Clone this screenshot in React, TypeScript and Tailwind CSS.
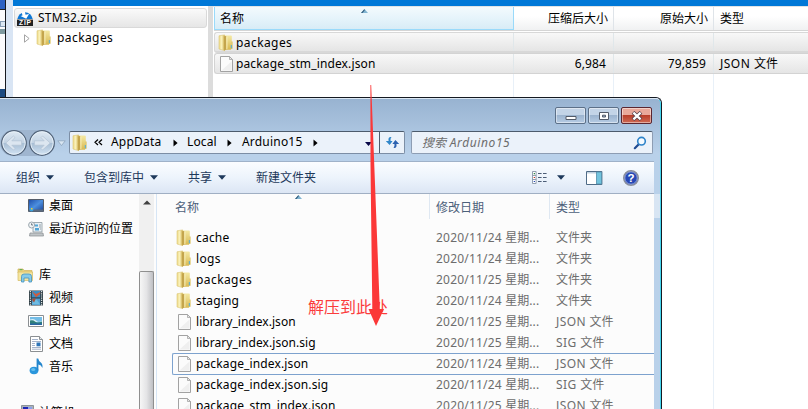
import React from "react";

const latin = "font-['Noto_Sans','Noto_Sans_CJK_SC',sans-serif]";

/* Latin runs get a slightly wider tracking than the Chinese ones. */
function Txt({
  children,
  className = "",
  track = "tracking-[0.13px]",
}: {
  children: string;
  className?: string;
  track?: string;
}) {
  const runs = children.match(/[\u4e00-\u9fff]+|[^\u4e00-\u9fff]+/g) ?? [];
  return (
    <span className={`whitespace-pre ${className}`}>
      {runs.map((r, i) =>
        /[\u4e00-\u9fff]/.test(r) ? (
          <span key={i}>{r}</span>
        ) : (
          <span key={i} className={track}>{r}</span>
        ),
      )}
    </span>
  );
}

function Folder() {
  return (
    <svg width="16" height="18" viewBox="0 0 16 18" className="shrink-0">
      <defs>
        <linearGradient id="fa" x1="0" x2="1" y1="0" y2="0">
          <stop offset="0" stopColor="#ecd98a" />
          <stop offset=".5" stopColor="#fbf3bd" />
          <stop offset="1" stopColor="#c9a842" />
        </linearGradient>
        <linearGradient id="fb" x1="0" x2="0" y1="0" y2="1">
          <stop offset="0" stopColor="#f4e9a4" />
          <stop offset="1" stopColor="#d9b950" />
        </linearGradient>
      </defs>
      <path d="M6.8 1.6h6.2q.8 0 .8.8V14.2l-1 1.5H6.8z" fill="url(#fb)" />
      <path d="M1 1.8 6.6.9v15.7L1 15z" fill="url(#fa)" stroke="#dcc674" strokeWidth=".6" />
      <path d="M6 2.2 8.2 2v13.4l-2.2 1.4z" fill="#c4a54c" />
      <path d="M8.4 2.4h1v12.4l-1 .5z" fill="#f8efbd" />
      <path d="M13.4 7.5h1.2v7.2h-1.2z" fill="#dcc15c" />
      <path d="M12.8 11h1.1v3.2h-1.1z" fill="#5aaed2" />
    </svg>
  );
}

function Page() {
  return (
    <svg width="16" height="18" viewBox="0 0 16 18" className="shrink-0">
      <path d="M2.5 1.5h9l3 3v12h-12z" fill="#fbfbfb" stroke="#a2a2a2" />
      <path d="M3.5 15.5h10v-9z" fill="#efefef" />
      <path d="M11.5 1.5v3h3z" fill="#e9e9e9" stroke="#a2a2a2" strokeWidth=".8" />
    </svg>
  );
}

function SortMark() {
  return (
    <svg width="7" height="4" viewBox="0 0 7 4">
      <path d="M0 4 3.5 0 7 4z" fill="#82b5d2" />
      <path d="M0 4 3.5 0v1.5L1.5 4z" fill="#2f5878" />
    </svg>
  );
}

function ZipIcon() {
  return (
    <svg width="16" height="17" viewBox="0 0 16 17" className="shrink-0">
      <path d="M.3 9A7.8 8 0 0 1 15.7 9z" fill="#0d76d3" />
      <path d="M5.4 1.6h3.2v3.2h3.6L8.4 9 3.4 5h2z" fill="#fff" transform="rotate(-12 8 5)" />
      <path d="M0 9.6h16V16H0z" fill="#222" />
      <text x="8" y="15.2" textAnchor="middle" fontSize="6.6" fontWeight="700" fill="#fff" textLength="12" fontFamily="Liberation Sans">ZIP</text>
    </svg>
  );
}

function Down({ className = "" }: { className?: string }) {
  return (
    <svg width="8" height="5" viewBox="0 0 8 5" className={`shrink-0 ${className}`}>
      <path d="M0 .3h8L4 4.8z" fill="#1e395b" />
    </svg>
  );
}

function Crumb({ className = "" }: { className?: string }) {
  return (
    <svg width="5" height="8" viewBox="0 0 5 8" className={`shrink-0 ${className}`}>
      <path d="M.5.5v7L4.6 4z" fill="#000" />
    </svg>
  );
}

function DesktopIcon() {
  return (
    <svg width="16" height="16" viewBox="0 0 16 16" className="shrink-0">
      <defs>
        <linearGradient id="dk" x1="0" y1="0" x2="1" y2="1">
          <stop offset="0" stopColor="#1d4ca8" />
          <stop offset=".5" stopColor="#4c8fdf" />
          <stop offset="1" stopColor="#173f94" />
        </linearGradient>
      </defs>
      <path d="M.5 1.5h15v12H.5z" fill="url(#dk)" stroke="#555d69" />
      <path d="M1 11.5h14v2H1z" fill="#5a6b80" />
      <circle cx="3.5" cy="11.5" r="2" fill="#3ba0dc" />
      <path d="M3 10h1.5v1.5H3z" fill="#f6c832" />
    </svg>
  );
}

function RecentIcon() {
  return (
    <svg width="16" height="16" viewBox="0 0 16 16" className="shrink-0">
      <path d="M5 1.5h9v9.5H5z" fill="#e9f1f6" stroke="#8c979e" strokeWidth=".8" />
      <path d="M7 3.5h3v2H7zM7 7h4v2.5H7z" fill="#55a5d5" />
      <path d="M11 4h2M11 6h2M12 8h1" stroke="#7f8b92" strokeWidth=".8" />
      <path d="M2 12h13l.5 3h-14z" fill="#c0c5c8" stroke="#868c90" strokeWidth=".7" />
      <circle cx="3.6" cy="4" r="3" fill="#f1f4f6" stroke="#9aa5ad" />
      <path d="M3.6 2.3V4H5" stroke="#52606a" fill="none" strokeWidth=".8" />
    </svg>
  );
}

function LibraryIcon() {
  return (
    <svg width="17" height="16" viewBox="0 0 17 16" className="shrink-0">
      <path d="M1 2h5l1.2 1.5H15V6H1z" fill="#edd582" stroke="#d0b25a" strokeWidth=".7" />
      <path d="M2.5 2.7h3" stroke="#4ea84a" />
      <path d="M1 5h14.5v8.5H1z" fill="#f5e5a0" stroke="#d6bb63" strokeWidth=".7" />
      <path d="M4.5 15V9.5q0-2.5 2.5-2.5h5q2.5 0 2.5 2.5V15h-2.6v-4H7v4z" fill="#86cbea" stroke="#4592bd" strokeWidth=".8" />
    </svg>
  );
}

function VideoIcon() {
  return (
    <svg width="16" height="16" viewBox="0 0 16 16" className="shrink-0">
      <path d="M1 .5h14v15H1z" fill="#2d3b42" />
      <path d="M3.8 1h8.4v6.4H3.8z" fill="#3a8dc4" />
      <path d="M3.8 8.5h8.4V15H3.8z" fill="#529ed2" />
      <path d="M3.8 1 8 4l4.2-2v2L8 7.2z" fill="#cf5c3e" />
      <path d="M3.8 14 7 9l2 1 3.2 4.5z" fill="#6fbce2" />
      <path d="M3.8 9.5 6 8.5h2l-2 4z" fill="#a4503e" />
      <path d="M2.4 1v15M13.6 1v15" stroke="#dbe3e6" strokeWidth="1.2" strokeDasharray="1.2 1" />
    </svg>
  );
}

function PictureIcon() {
  return (
    <svg width="16" height="16" viewBox="0 0 16 16" className="shrink-0">
      <path d="M.5 2.5h15v11H.5z" fill="#fff" stroke="#8b8f92" />
      <path d="M2 4h12v8H2z" fill="#73bce6" />
      <path d="M2 6.5q4-1.5 6 1t6 .5v1H2z" fill="#d9f0f8" />
      <path d="M2 7.5q3-1 5 1t7 0V12H2z" fill="#2f7f7b" />
      <path d="M2 10.5h12V12H2z" fill="#2b66a3" />
    </svg>
  );
}

function DocIcon() {
  return (
    <svg width="16" height="16" viewBox="0 0 16 16" className="shrink-0">
      <path d="M2.5.5h9l3 3v12h-12z" fill="#fff" stroke="#8b8f92" />
      <path d="M11.5.5v3h3" fill="#e8edf0" stroke="#8b8f92" />
      <path d="M4 3.5h6M4 5.5h9M4 7.5h3M4 9.5h3M4 11.5h9M4 13.2h9" stroke="#8ea0bd" strokeWidth=".8" />
      <path d="M8.5 6.5h4v3.8h-4z" fill="#2f75b8" />
    </svg>
  );
}

function MusicIcon() {
  return (
    <svg width="16" height="17" viewBox="0 0 16 17" className="shrink-0">
      <ellipse cx="6" cy="12.5" rx="4.4" ry="3.7" fill="#2a96dc" />
      <ellipse cx="5.2" cy="11.5" rx="2" ry="1.5" fill="#67c0ef" />
      <path d="M8.6 12.5V.5h1.6q.4 2.3 2.6 4t1.6 5.4q-1.2-3-4-3.4v6z" fill="#2587cd" />
    </svg>
  );
}

function ComputerIcon() {
  return (
    <svg width="14" height="16" viewBox="0 0 14 16" className="shrink-0">
      <path d="M1.5.5h12v11h-12z" fill="#aab2ba" stroke="#8d949b" />
      <path d="M3 2h9v8H3z" fill="#1c25b5" />
      <path d="M8 2h4v8H8z" fill="#8ba1ed" />
    </svg>
  );
}

const files: [string, string, string][] = [
  ["cache", "2020/11/24 星期...", "文件夹"],
  ["logs", "2020/11/24 星期...", "文件夹"],
  ["packages", "2020/11/25 星期...", "文件夹"],
  ["staging", "2020/11/24 星期...", "文件夹"],
  ["library_index.json", "2020/11/25 星期...", "JSON 文件"],
  ["library_index.json.sig", "2020/11/25 星期...", "SIG 文件"],
  ["package_index.json", "2020/11/24 星期...", "JSON 文件"],
  ["package_index.json.sig", "2020/11/24 星期...", "SIG 文件"],
  ["package_stm_index.json", "2020/11/25 星期...", "JSON 文件"],
];

const nameTrack: Record<string, string> = {
  cache: "tracking-[0.2px]",
  logs: "tracking-[0.3px]",
  packages: "tracking-[0.42px]",
  "library_index.json": "tracking-[0.04px]",
  "library_index.json.sig": "tracking-[0.06px]",
};

function NavRow({ icon, label, className = "pl-7" }: { icon: React.ReactNode; label: string; className?: string }) {
  return (
    <div className={`flex h-[23px] shrink-0 items-center gap-[5px] ${className}`}>
      {icon}
      <Txt>{label}</Txt>
    </div>
  );
}

function ArchiveWindow() {
  return (
    <div className="flex h-[100px] w-full">
      <div className="flex w-[6px] shrink-0 flex-col border-r border-[#171a20] bg-[#fbfbfd]">
        <div className="h-[9px] bg-[#2c62c4]" />
        <div className="h-px bg-[#222]" />
        <div className="mt-[11px] h-[6px] border border-r-0 border-[#8aa0b8] bg-[#dbe7f3]" />
        <div className="mt-[2px] h-[5px] bg-[#7f9aa0]" />
        <div className="mt-[55px] h-[8px] bg-[#1c4a80]" />
      </div>
      <div className="w-[7px] shrink-0 bg-[#d9e5f4]" />
      <div className="flex min-w-0 flex-1 flex-col">
        <div className="h-[6px] shrink-0 bg-[#0078d7]" />
        <div className="flex min-h-0 flex-1">
          <div className="w-[195px] shrink-0 bg-white pt-[2px] pl-px">
            <div className="flex h-5 w-[193px] items-center gap-[5px] rounded-[3px] border border-[#d9d9d9] bg-linear-to-b from-[#fafafa] to-[#e6e6e6] pl-[2px]">
              <ZipIcon />
              <Txt track="tracking-[0.25px]">STM32.zip</Txt>
            </div>
            <div className="flex h-5 items-center pl-[10px]">
              <svg width="6" height="9" viewBox="0 0 6 9">
                <path d="M.5.8v7.4l4.6-3.7z" fill="#fff" stroke="#9b9b9b" strokeWidth=".9" />
              </svg>
              <div className="ml-[6px] flex items-center gap-[5px]">
                <Folder />
                <Txt track="tracking-[0.42px]">packages</Txt>
              </div>
            </div>
          </div>
          <div className="w-[5px] shrink-0 bg-[#dcdcdc]" />
          <div className="flex min-w-0 flex-1 flex-col border-t border-[#dfe3e6] bg-white pl-px">
            <div className="flex h-[24px] shrink-0 border-b border-[#d5d5d5] bg-linear-to-b from-white via-white via-40% to-[#f0f1f2]">
              <div className="relative flex w-[300px] items-center border-x border-b border-[#9adafa] bg-linear-to-b from-[#f3fafd] via-[#e6f4fb] via-50% to-[#d8ecf6] pt-[2px] pl-[5px]">
                <Txt>名称</Txt>
                <div className="absolute top-[2px] left-[146px]"><SortMark /></div>
              </div>
              <div className="flex w-[100px] items-center justify-end border-r border-[#dfe4e9] pt-px pr-[5px]"><Txt>压缩后大小</Txt></div>
              <div className="flex w-[100px] items-center justify-end border-r border-[#dfe4e9] pt-px pr-[5px]"><Txt>原始大小</Txt></div>
              <div className="flex flex-1 items-center pt-px pl-[6px]"><Txt>类型</Txt></div>
            </div>
            <div className="mt-px flex h-[21px] shrink-0 items-center rounded-l-[3px] border border-r-0 border-b-2 border-[#d8d8d8] bg-linear-to-b from-[#f8f8f8] to-[#e5e5e5]">
              <div className="flex h-full w-[299px] items-center gap-[2px] border-r border-[#e0e7ea] pt-px pl-[3px]"><Folder /><Txt track="tracking-[0.42px]">packages</Txt></div>
              <div className="h-full w-[100px] border-r border-[#e0e7ea]" />
              <div className="h-full w-[100px] border-r border-[#e0e7ea]" />
            </div>
            <div className="flex h-[21px] shrink-0 items-center rounded-l-[3px] border border-r-0 border-[#d3d3d3] bg-linear-to-b from-[#f8f8f8] to-[#e5e5e5]">
              <div className="flex h-full w-[299px] items-center gap-[2px] border-r border-[#e0e7ea] pl-[3px]"><Page /><Txt>package_stm_index.json</Txt></div>
              <div className="flex h-full w-[100px] items-center justify-end border-r border-[#e0e7ea] pr-[7px]"><Txt>6,984</Txt></div>
              <div className="flex h-full w-[100px] items-center justify-end border-r border-[#e0e7ea] pr-[7px]"><Txt>79,859</Txt></div>
              <Txt className="pl-[6px]" track="tracking-[0.5px]">JSON 文件</Txt>
            </div>
            <div className="flex flex-1">
              <div className="w-[300px] border-r border-[#e8f0f8]" />
              <div className="w-[100px] border-r border-[#e8f0f8]" />
              <div className="w-[100px] border-r border-[#e8f0f8]" />
            </div>
          </div>
        </div>
      </div>
    </div>
  );
}

function NavButton({ flip = false }: { flip?: boolean }) {
  return (
    <svg width="26" height="26" viewBox="0 0 26 26" className={flip ? "-scale-x-100" : ""}>
      <defs>
        <linearGradient id="nb" x1="0" y1="0" x2="0" y2="1">
          <stop offset="0" stopColor="#dfe9f3" />
          <stop offset=".48" stopColor="#c4d4e4" />
          <stop offset=".52" stopColor="#a9bfd5" />
          <stop offset="1" stopColor="#d3e4f4" />
        </linearGradient>
      </defs>
      <circle cx="13" cy="13" r="12.3" fill="url(#nb)" stroke="#53647a" strokeWidth="1.2" />
      <circle cx="13" cy="13" r="11.2" fill="none" stroke="#e6eff7" strokeWidth=".9" />
      <path d="M4.8 13 12.4 6 14 7.6l-3.2 3.2h9.8v4.4h-9.8l3.2 3.2-1.6 1.6z" fill="#dce6f0" stroke="#b3c3d4" strokeWidth=".7" />
    </svg>
  );
}

function CaptionButton({ close = false, children }: { close?: boolean; children: React.ReactNode }) {
  return (
    <div
      className={`flex h-[17px] w-[31px] items-center justify-center rounded-[2px] border shadow-[inset_0_0_0_1px_rgba(255,255,255,0.45)] bg-linear-to-b ${
        close
          ? "border-[#5b2630] from-[#e9a99b] from-45% via-[#b93f2b] via-50% to-[#cf6a54]"
          : "border-[#5c7088] from-[#c3d4e7] from-45% via-[#9cb4cf] via-50% to-[#b6cce4]"
      }`}
    >
      {children}
    </div>
  );
}

function TitleBar() {
  return (
    <div className="flex h-[32px] justify-end gap-[2px] pt-[8px] pr-[8px]">
      <CaptionButton>
        <svg width="12" height="6" viewBox="0 0 12 6" className="mt-[4px]"><path d="M1 1.5h10v3H1z" fill="#fff" stroke="#535b69" /></svg>
      </CaptionButton>
      <CaptionButton>
        <svg width="12" height="10" viewBox="0 0 12 10"><path d="M1.5 1.5h9v7h-9z" fill="#fff" stroke="#535b69" /><path d="M4.5 4.2h3v1.8h-3z" fill="#9fb6d0" stroke="#535b69" /></svg>
      </CaptionButton>
      <CaptionButton close>
        <svg width="12" height="10" viewBox="0 0 12 10">
          <path d="m2 1.3 8 7.4M10 1.3 2 8.7" stroke="#55404a" strokeWidth="3.8" />
          <path d="m2.4 1.6 7.2 6.8M9.6 1.6 2.4 8.4" stroke="#fff" strokeWidth="2.2" />
        </svg>
      </CaptionButton>
    </div>
  );
}

function AddressRow() {
  return (
    <div className="flex h-[30px] items-start">
      <div className="-mt-px flex h-[26px] w-[55px] gap-[2px] rounded-full bg-[#9fb5cf] pl-px">
        <NavButton />
        <NavButton flip />
      </div>
      <svg width="9" height="7" viewBox="0 0 9 7" className="mt-[9px] ml-[2px]">
        <path d="M.8.8h7.4L4.5 5.6z" fill="#d9e6f2" stroke="#8ea5bd" strokeWidth=".8" />
      </svg>
      <div className="ml-[3px] flex h-[23px] w-[336px] items-center rounded-[2px] border border-[#7c8ea5] border-t-[#4c5b6c] bg-[#ebf2fa] pl-[2px]">
        <Folder />
        <svg width="9" height="7" viewBox="0 0 9 7" className="ml-[6px]">
          <path d="M4 .5 1 3.3 4 6M8 .5 5 3.3 8 6" fill="none" stroke="#000" strokeWidth="1.2" />
        </svg>
        <Txt className="-mt-px ml-[8px] w-[52px]" track="tracking-[0.2px]">AppData</Txt>
        <Crumb className="ml-[10px]" />
        <Txt className="-mt-px ml-[9px] w-[31px]">Local</Txt>
        <Crumb className="ml-[9px]" />
        <Txt className="-mt-px ml-[10px] w-[62px]" track="tracking-[0.2px]">Arduino15</Txt>
        <Crumb className="ml-[9px]" />
        <svg width="7" height="4" viewBox="0 0 7 4" className="ml-[47px] mt-[2px]"><path d="M0 0h7L3.5 4z" fill="#080848" /></svg>
        <div className="ml-auto flex h-full w-[25px] items-center justify-center border-l border-[#4c5b6c]">
          <svg width="15" height="13" viewBox="0 0 15 13">
            <path d="M6 1Q2.8.8 3.6 5H.8l3.8 4 3-4H5.6Q5 2.5 6.4 1.6z" fill="#2f86c9" />
            <path d="M9 12q3.2.2 2.4-4h2.8l-3.8-4-3 4h2Q10 10.5 8.6 11.4z" fill="#2d62b0" />
          </svg>
        </div>
      </div>
      <div className="ml-[6px] flex h-[23px] w-[242px] items-center justify-between rounded-[2px] border border-[#8d9db3] border-t-[#4c5b6c] bg-[#ebf2fa] pr-[5px] pl-[10px]">
        <Txt className="text-[#6d6d6d] italic" track="tracking-[0.6px]">搜索 Arduino15</Txt>
        <svg width="14" height="14" viewBox="0 0 14 14">
          <path d="M6 8 1.8 12.2" stroke="#1f4b91" strokeWidth="2.2" strokeLinecap="round" />
          <circle cx="8.5" cy="5.2" r="3.8" fill="#f4faff" stroke="#2d83c9" strokeWidth="1.6" />
        </svg>
      </div>
    </div>
  );
}

function ToolBar() {
  return (
    <div className="flex h-[33px] w-[654px] shrink-0 items-center border-t border-b border-t-[#9fb2c9] border-b-[#a0afc3] bg-linear-to-b from-[#fbfdff] via-[#edf4fc] via-50% to-[#dce6f4] pl-4 text-[#1e395b]">
      <Txt>组织</Txt><Down className="ml-[6px]" />
      <Txt className="ml-[30px]">包含到库中</Txt><Down className="ml-[6px]" />
      <Txt className="ml-[30px]">共享</Txt><Down className="ml-[6px]" />
      <Txt className="ml-[30px]">新建文件夹</Txt>
      <svg width="15" height="13" viewBox="0 0 15 13" className="ml-[216px]">
        <path d="M.5.5h3.6v12H.5zM.5 4.5h3.6M.5 8.5h3.6" fill="#fff" stroke="#8896a8" strokeWidth=".9" />
        <path d="M1.7 2h1.3v1.2H1.7z" fill="#308b48" />
        <path d="M1.7 5.9h1.3v1.2H1.7z" fill="#c83224" />
        <path d="M1.7 9.9h1.3v1.2H1.7z" fill="#274bb5" />
        <path d="M6 2.5h3.6M11 2.5h3.6M6 6.5h3.6M11 6.5h3.6M6 10.5h3.6M11 10.5h3.6" stroke="#4c5d76" />
      </svg>
      <Down className="ml-[10px]" />
      <svg width="17" height="14" viewBox="0 0 17 14" className="ml-[21px]">
        <path d="M.5.5h15.4v13H.5z" fill="#fff" stroke="#4f6b86" />
        <path d="M1 1h14.4v1.6H1z" fill="#c2d2e0" />
        <path d="M10.5 1h5v12h-5z" fill="#72c3dd" stroke="#4f8ba8" strokeWidth=".8" />
      </svg>
      <svg width="16" height="16" viewBox="0 0 16 16" className="ml-5">
        <circle cx="8" cy="8" r="7.3" fill="#2748b4" stroke="#8b8f99" strokeWidth="1.4" />
        <circle cx="8" cy="8" r="6.2" fill="none" stroke="#d3daf0" strokeWidth=".6" />
        <text x="8" y="12.2" textAnchor="middle" fontSize="11.5" fontWeight="700" fill="#fff" fontFamily="Liberation Sans">?</text>
      </svg>
    </div>
  );
}

function NavPane() {
  return (
    <div className="flex w-[139px] shrink-0 flex-col overflow-hidden bg-[#fcfcfc]">
      <NavRow icon={<DesktopIcon />} label="桌面" />
      <NavRow icon={<RecentIcon />} label="最近访问的位置" />
      <NavRow className="mt-[23px] pl-[17px]" icon={<LibraryIcon />} label="库" />
      <NavRow icon={<VideoIcon />} label="视频" />
      <NavRow icon={<PictureIcon />} label="图片" />
      <NavRow icon={<DocIcon />} label="文档" />
      <NavRow icon={<MusicIcon />} label="音乐" />
      <NavRow className="mt-[23px] pl-5" icon={<ComputerIcon />} label="计算机" />
    </div>
  );
}

function FileList() {
  return (
    <div className="flex flex-1 flex-col overflow-hidden bg-[#fcfcfc]">
      <div className="flex h-[25px] shrink-0 items-center text-[#4c607a]">
        <div className="relative flex h-full w-[273px] items-center border-r border-[#dfe8f2] pt-[3px] pl-[18px]">
          <Txt>名称</Txt>
          <div className="absolute top-px left-[138px]"><SortMark /></div>
        </div>
        <div className="flex h-full w-[120px] items-center border-r border-[#dfe8f2] pt-[3px] pl-[6px]"><Txt>修改日期</Txt></div>
        <Txt className="pt-[3px] pl-[6px]">类型</Txt>
      </div>
      <div className="mt-2 flex flex-col">
        {files.map(([name, date, type], i) => (
          <div
            key={name}
            className={`ml-[15px] flex shrink-0 items-center border border-r-0 ${
              i === 6 ? "h-[22px] -mb-px rounded-l-[2px] border-[#7da2ce]" : "h-[21px] border-transparent"
            }`}
          >
            <div className="flex w-[263px] items-center gap-[4px] pl-[3px]">
              {i < 4 ? <Folder /> : <Page />}
              <Txt className="text-black" track={nameTrack[name]}>{name}</Txt>
            </div>
            <Txt className="w-[120px] text-[#6d6d6d]" track="tracking-[0.2px]">{date}</Txt>
            <Txt className="text-[#6d6d6d]" track="tracking-[0.4px]">{type}</Txt>
          </div>
        ))}
      </div>
    </div>
  );
}

function ExplorerWindow() {
  return (
    <div className="absolute top-[97px] left-0 flex h-[312px] w-[662px] flex-col overflow-hidden rounded-tr-[6px] border-t border-r border-[#151a22] bg-[#b9d1ea]">
      <div className="flex flex-1 flex-col overflow-hidden rounded-tr-[5px] border-t border-r border-t-[#dce8f3] border-r-[#43d5ee] bg-linear-to-b from-[#98b3d1] to-[#b9d1ea] to-[55px]">
        <div className="h-[62px] shrink-0">
          <TitleBar />
          <AddressRow />
        </div>
        <ToolBar />
        <div className="flex min-h-0 flex-1">
          <div className="flex w-[654px]">
            <NavPane />
            <div className="flex w-[15px] shrink-0 flex-col bg-[#f0f0f0]">
              <svg width="15" height="17" viewBox="0 0 15 17"><path d="m4 10.5 4-4 4 4z" fill="#404040" /></svg>
              <div className="mt-[60px] flex-1 rounded-t-[2px] border border-b-0 border-[#8f8f8f] bg-linear-to-r from-[#f6f6f6] via-[#e4e4e6] via-50% to-[#bfc0c4]" />
            </div>
            <div className="w-[3px] shrink-0 border-r border-[#d6e5f5] bg-[#fcfcfc]" />
            <FileList />
          </div>
          <div className="h-[24px] flex-1 bg-[#d8e5f3]" />
        </div>
      </div>
    </div>
  );
}

export default function App() {
  return (
    <div className={`relative h-[409px] w-[808px] overflow-hidden bg-white text-[12px] leading-4 text-black ${latin}`}>
      <ArchiveWindow />
      <div className="flex h-[309px] pl-[513px]">
        <div className="w-px bg-[#e8f0f8]" />
        <div className="ml-[99px] w-px bg-[#e8f0f8]" />
        <div className="ml-[99px] w-px bg-[#e8f0f8]" />
      </div>
      <ExplorerWindow />
      <div className="absolute top-[297px] left-[308px] text-[16px] leading-5 text-[#fb3c3c]">解压到此处</div>
      <svg className="absolute top-[85px] left-[365px]" width="22" height="242" viewBox="0 0 22 242">
        <path d="M5.4 0h.8L14.8 224h4.2L11 241 3.5 224h3.8L5.5 80z" fill="#fb3838" />
      </svg>
    </div>
  );
}
